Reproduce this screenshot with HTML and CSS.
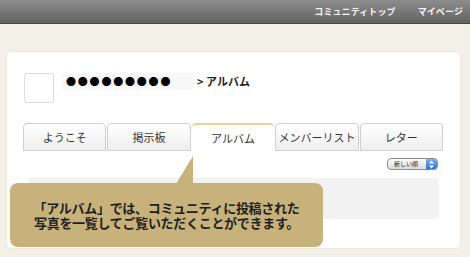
FILE: index.html
```html
<!DOCTYPE html>
<html lang="ja">
  <head>
    <meta charset="utf-8">
    <title>アルバム</title>
    <link rel="stylesheet" href="styles.css">
  </head>
  <body>
    <div class="topbar">
      <a class="topbar-link">コミュニティトップ</a>
      <a class="topbar-link">マイページ</a>
    </div>

    <div class="page">
      <div class="card">
        <div class="profile">
          <div class="avatar"></div>
          <div class="name">●●●●●●●●●</div>
          <div class="crumb">&gt; アルバム</div>
        </div>

        <div class="tabs">
          <div class="tab">ようこそ</div>
          <div class="tab">掲示板</div>
          <div class="tab is-active">アルバム</div>
          <div class="tab">メンバーリスト</div>
          <div class="tab">レター</div>
        </div>

        <div class="sort-row">
          <div class="sort-select">
            <span class="sort-label">新しい順</span>
            <span class="sort-arrows">
              <svg width="7" height="9" viewBox="0 0 7 9">
                <path d="M3.5 0.5 L6 3.5 H1 Z" fill="#fff"/>
                <path d="M3.5 8.5 L6 5.5 H1 Z" fill="#fff"/>
              </svg>
            </span>
          </div>
        </div>

        <div class="album-box"></div>

        <!-- help balloon over the page -->
        <div class="balloon">
          <svg class="balloon-tip" width="18" height="28" viewBox="0 0 18 28">
            <path d="M17 0 L17 28 L0 28 Z" fill="#c8b27b"/>
          </svg>
          <p class="balloon-text">「アルバム」では、コミュニティに投稿された<br>写真を一覧してご覧いただくことができます。</p>
        </div>
      </div>
    </div>
  </body>
</html>
```

FILE: styles.css
```css
body {
  margin: 0;
  font-family: "Noto Sans CJK JP", "DejaVu Sans", sans-serif;
  background-color: #f3f0e8;
  color: #333;
}

/* top bar */
.topbar {
  height: 23px;
  display: flex;
  justify-content: flex-end;
  align-items: center;
  gap: 22px;
  padding-right: 7px;
  background: linear-gradient(#8d8d8d, #626262);
  border-bottom: 1px solid #4a4a4a;
}
.topbar-link {
  color: #f4f4f4;
  font-size: 9px;
  font-weight: bold;
  letter-spacing: 0.1px;
}

/* content card */
.page {
  padding: 27px 9px 8px 6px;
}
.card {
  position: relative;
  background-color: #fff;
  border: 1px solid #ebe7de;
  border-radius: 5px;
  padding: 21px 17px 29px 16px;
}

.profile {
  display: flex;
  align-items: center;
}
.avatar {
  width: 28px;
  height: 28px;
  border: 1px solid #dcdcdc;
  border-radius: 3px;
  margin-left: 1px;
}
.name {
  margin-left: 8px;
  margin-top: -14px;
  padding: 1px 0 1px 4px;
  width: 129px;
  background-color: #f8f8f8;
  color: #000;
  font-size: 10px;
  line-height: 15px;
  letter-spacing: 1.8px;
}
.crumb {
  margin-left: 2px;
  margin-top: -14px;
  font-size: 11px;
  font-weight: bold;
  color: #222;
}

/* tabs */
.tabs {
  display: flex;
  gap: 1px;
  margin-top: 20px;
}
.tab {
  width: 82px;
  height: 26px;
  border: 1px solid #cfcfcf;
  border-radius: 4px 4px 0 0;
  background: linear-gradient(#ffffff, #eeeeee);
  font-size: 11px;
  line-height: 26px;
  text-align: center;
  color: #333;
}
.tab.is-active {
  border: none;
  border-top: 2px solid #e8d29b;
  background: #fff;
  width: 83px;
  height: 26px;
}

/* sort */
.sort-row {
  display: flex;
  justify-content: flex-end;
  padding: 7px 5px 0 0;
}
.sort-select {
  display: flex;
  align-items: center;
  width: 49px;
  height: 10px;
  border: 1px solid #8d8d8d;
  border-radius: 4px;
  background: linear-gradient(#fdfdfd, #dcdcdc);
  overflow: hidden;
}
.sort-label {
  flex: 1;
  font-size: 6px;
  line-height: 10px;
  padding-left: 6px;
  color: #222;
}
.sort-arrows {
  width: 11px;
  height: 10px;
  display: flex;
  align-items: center;
  justify-content: center;
  background: linear-gradient(#7ab0ee, #2f6fd6);
}

.album-box {
  margin: 8px 4px 0 5px;
  height: 41px;
  background-color: #f2f2f2;
  border-radius: 3px;
}

/* balloon */
.balloon {
  position: absolute;
  left: 3px;
  top: 131px;
  width: 313px;
  height: 64px;
  background-color: #c8b27b;
  border-radius: 8px;
  display: flex;
  align-items: center;
  justify-content: center;
}
.balloon-tip {
  position: absolute;
  left: 166px;
  top: -27px;
}
.balloon-text {
  margin: -1px 0 0 0;
  font-size: 13px;
  line-height: 15px;
  font-weight: bold;
  color: #1e1e1e;
  text-align: center;
  letter-spacing: -0.3px;
}
```
